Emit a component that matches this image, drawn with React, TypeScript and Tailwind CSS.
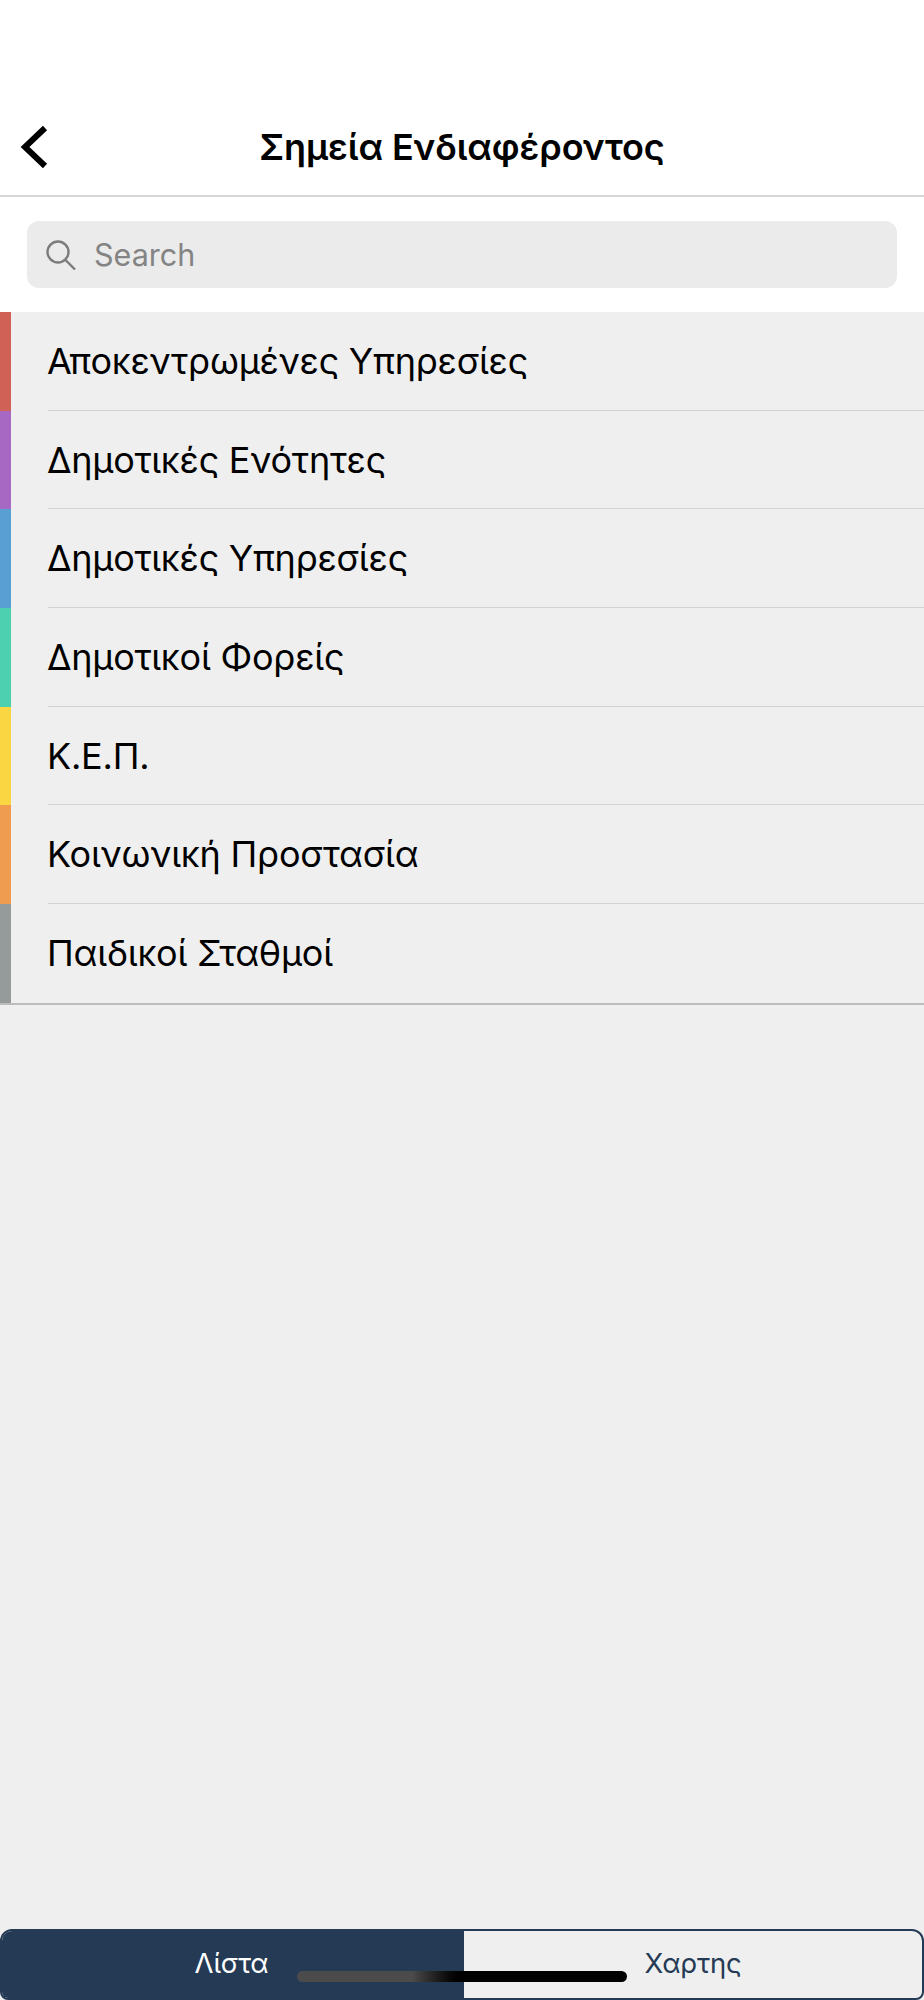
const rows = [
  { name: "Αποκεντρωμένες Υπηρεσίες", bar: "bg-[#d06156]" },
  { name: "Δημοτικές Ενότητες", bar: "bg-[#a768c4]" },
  { name: "Δημοτικές Υπηρεσίες", bar: "bg-[#5a9fd4]" },
  { name: "Δημοτικοί Φορείς", bar: "bg-[#4dd0b0]" },
  { name: "Κ.Ε.Π.", bar: "bg-[#fbd643]" },
  { name: "Κοινωνική Προστασία", bar: "bg-[#f09c50]" },
  { name: "Παιδικοί Σταθμοί", bar: "bg-[#959a9a]" },
];

export default function App() {
  return (
    <div className="relative flex h-[2000px] w-[924px] flex-col overflow-hidden bg-[#efefef] font-['Inter',sans-serif] text-black">
      <header className="flex h-[197px] items-end border-b-2 border-[#d6d6d6] bg-white">
        <div className="relative flex h-[90px] w-full items-center justify-center pb-[6px]">
          <svg className="absolute left-[20px] top-[20px] h-[44px] w-[28px]" viewBox="0 0 28 44" fill="none" aria-hidden="true">
            <path d="M25 3 L5 22 L25 41" stroke="black" strokeWidth="6" />
          </svg>
          <h1 className="text-[36px] font-semibold leading-none tracking-[-0.1px]">Σημεία Ενδιαφέροντος</h1>
        </div>
      </header>

      <div className="bg-white px-[27px] py-[24px]">
        <div className="flex h-[67px] items-center rounded-[12px] bg-[#ebebeb] pl-[19px]">
          <svg className="h-[30px] w-[30px] text-[#7c7c7c]" viewBox="0 0 30 30" fill="none" stroke="currentColor" strokeWidth="2.4" aria-hidden="true">
            <circle cx="12" cy="12" r="10.5" />
            <path d="M19.5 20 L29 29.5" />
          </svg>
          <span className="ml-[18px] pt-[2px] text-[30.5px] leading-none text-[#848484]">Search</span>
        </div>
      </div>

      <ul className="border-b-2 border-[#bdbdbd]">
        {rows.map((row, i) => (
          <li key={row.name} className="flex h-[98.7px]">
            <div className={`w-[11px] ${row.bar}`} />
            <div className={`ml-[37px] flex flex-1 items-center text-[36px] leading-none tracking-[-0.22px] ${i < rows.length - 1 ? "border-b border-[#d2d2d2]" : ""}`}>
              <span className="-ml-[1px]">{row.name}</span>
            </div>
          </li>
        ))}
      </ul>

      <nav className="mt-auto flex h-[71px] overflow-hidden rounded-t-[12px] rounded-b-[8px] border-2 border-[#243a55] text-[27.5px] tracking-[-0.2px]">
        <div className="flex w-[462px] items-center justify-center bg-[#243a55] pb-[2px] pr-[3px] text-white">Λίστα</div>
        <div className="flex flex-1 items-center justify-center pb-[2px] text-[#243a55]">Χαρτης</div>
      </nav>

      <div className="absolute left-[297px] top-[1971px] h-[11px] w-[330px] rounded-full bg-gradient-to-r from-[#4b4b4b] from-[35%] to-black to-[52%]" />
    </div>
  );
}
